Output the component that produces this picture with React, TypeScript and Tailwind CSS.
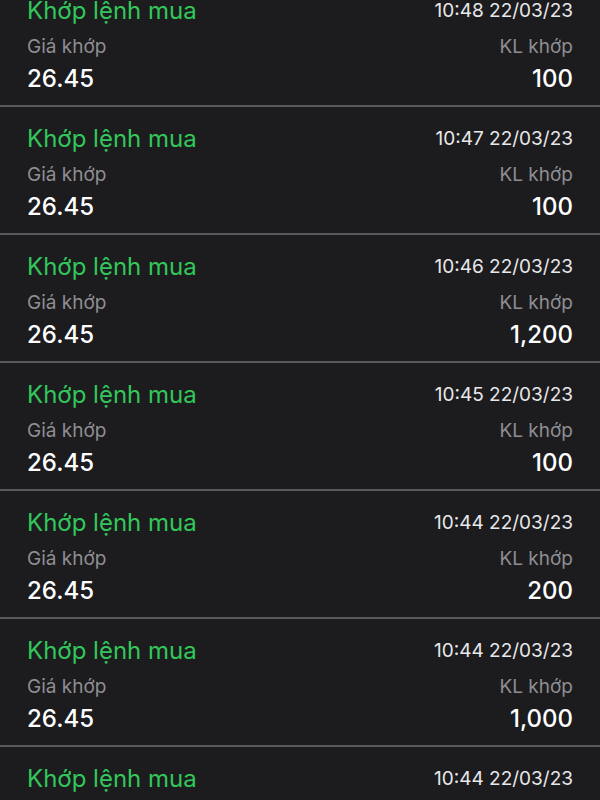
const FILLS = [
  { time: "10:48 22/03/23", qty: "100" },
  { time: "10:47 22/03/23", qty: "100" },
  { time: "10:46 22/03/23", qty: "1,200" },
  { time: "10:45 22/03/23", qty: "100" },
  { time: "10:44 22/03/23", qty: "200" },
  { time: "10:44 22/03/23", qty: "1,000" },
  { time: "10:44 22/03/23", qty: "100" },
];

function FillRow({ time, qty }: { time: string; qty: string }) {
  return (
    <div className="h-[128px] border-b-2 border-[#5a5a5c] px-[27px] pt-[18px]">
      <div className="flex items-center justify-between h-[28px]">
        <span className="text-[24px] text-[#32c75a]">Khớp lệnh mua</span>
        <span className="text-[19px] text-[#e8e8ea]">{time}</span>
      </div>
      <div className="mt-[10px] flex items-center justify-between h-[24px] text-[19px] text-[#8e8e93]">
        <span>Giá khớp</span>
        <span>KL khớp</span>
      </div>
      <div className="mt-[6px] flex items-center justify-between h-[28px] text-[24px] font-medium text-white">
        <span>26.45</span>
        <span>{qty}</span>
      </div>
    </div>
  );
}

export default function App() {
  return (
    <div
      className="h-[800px] w-[600px] overflow-hidden bg-[#1c1c1e]"
      style={{ fontFamily: "Inter, 'Noto Sans', sans-serif" }}
    >
      <div className="-mt-[21px]">
        {FILLS.map((f, i) => (
          <FillRow key={i} time={f.time} qty={f.qty} />
        ))}
      </div>
    </div>
  );
}
